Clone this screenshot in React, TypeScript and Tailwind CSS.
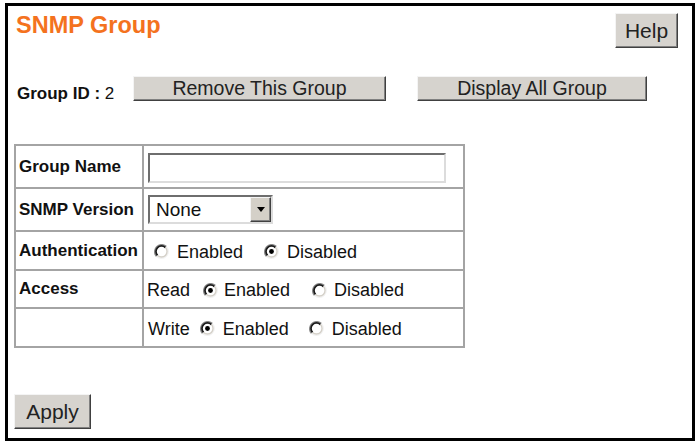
import React from "react";

function Radio({ checked }: { checked?: boolean }) {
  return (
    <svg width="15" height="15" viewBox="0 0 13 13" className="shrink-0">
      <circle cx="6.5" cy="6.5" r="5.5" fill="#ffffff" />
      <path d="M2.26 10.74 A6 6 0 0 1 10.74 2.26" fill="none" stroke="#8a8a8a" strokeWidth="1.4" />
      <path d="M10.74 2.26 A6 6 0 0 1 2.26 10.74" fill="none" stroke="#f2f2f2" strokeWidth="1.2" />
      <path d="M3.1 9.9 A4.8 4.8 0 0 1 9.9 3.1" fill="none" stroke="#1a1a1a" strokeWidth="1.5" />
      <path d="M9.9 3.1 A4.8 4.8 0 0 1 3.1 9.9" fill="none" stroke="#d4d0c8" strokeWidth="1.2" />
      {checked && <circle cx="6.5" cy="6.5" r="2.1" fill="#000000" />}
    </svg>
  );
}

const btn =
  "flex items-center justify-center bg-[#d6d3ce] border border-t-[#f4f4f4] border-l-[#f4f4f4] border-r-[#404040] border-b-[#404040] shadow-[inset_-1px_-1px_0_#808080] text-[#222] leading-none";

export default function App() {
  return (
    <div className="w-[698px] h-[442px] bg-white font-['Liberation_Sans',Arial,sans-serif] text-[#111] pt-[3px] pl-[5px]">
      <div className="w-[690px] h-[438px] border-[3px] border-black flex flex-col">
        {/* header */}
        <div className="flex justify-between items-start pt-[7px] pl-[8px] pr-[14px]">
          <div className="mt-[1px] text-[23.5px] leading-[23px] font-bold text-[#f4721e]">SNMP Group</div>
          <button className={btn + " w-[63px] h-[35px] text-[21px]"}>Help</button>
        </div>

        {/* group id row */}
        <div className="flex items-start mt-[28px] pl-[9px]">
          <div className="w-[116px] mt-[10px] text-[17px] leading-[16px]">
            <span className="font-bold">Group ID : </span>
            <span>2</span>
          </div>
          <button className={btn + " w-[253px] h-[25px] text-[19.5px]"}>Remove This Group</button>
          <button className={btn + " ml-[31px] w-[230px] h-[25px] text-[19.5px]"}>Display All Group</button>
        </div>

        {/* table */}
        <div className="mt-[42px] ml-[6px] w-[451px] border-2 border-b-0 border-[#a4a4a4] flex flex-col">
          {/* Group Name */}
          <div className="flex h-[43px] border-b-2 border-[#a4a4a4]">
            <div className="w-[128px] border-r-2 border-[#a4a4a4] flex items-center pl-[3px] text-[17px] font-bold">
              Group Name
            </div>
            <div className="flex-1 pt-[7px] pl-[4px]">
              <div className="w-[298px] h-[30px] bg-white border-2 border-t-[#6e6e6e] border-l-[#6e6e6e] border-r-[#dcdcdc] border-b-[#dcdcdc]" />
            </div>
          </div>
          {/* SNMP Version */}
          <div className="flex h-[43px] border-b-2 border-[#a4a4a4]">
            <div className="w-[128px] border-r-2 border-[#a4a4a4] flex items-center pl-[3px] text-[17px] font-bold">
              SNMP Version
            </div>
            <div className="flex-1 pt-[6px] pl-[4px]">
              <div className="w-[125px] h-[29px] bg-white border-2 border-t-[#6e6e6e] border-l-[#6e6e6e] border-r-[#dcdcdc] border-b-[#dcdcdc] flex items-center">
                <span className="flex-1 pl-[6px] text-[19px] leading-none">None</span>
                <div className="w-[21px] h-[25px] bg-[#d4d0c8] border border-t-[#f4f4f4] border-l-[#f4f4f4] border-r-[#404040] border-b-[#404040] shadow-[inset_-1px_-1px_0_#808080] flex items-center justify-center">
                  <svg width="8" height="5" viewBox="0 0 8 5">
                    <path d="M0 0 H8 L4 5 Z" fill="#000" />
                  </svg>
                </div>
              </div>
            </div>
          </div>
          {/* Authentication */}
          <div className="flex h-[39px] border-b-2 border-[#a4a4a4]">
            <div className="w-[128px] border-r-2 border-[#a4a4a4] flex items-center pl-[3px] text-[17px] font-bold">
              Authentication
            </div>
            <div className="flex-1 flex items-center pl-[10px] pt-[2px] text-[18px] leading-none">
              <Radio />
              <span className="ml-[8px]">Enabled</span>
              <span className="ml-[21px] flex"><Radio checked /></span>
              <span className="ml-[8px]">Disabled</span>
            </div>
          </div>
          {/* Access Read */}
          <div className="flex h-[38px] border-b-2 border-[#a4a4a4]">
            <div className="w-[128px] border-r-2 border-[#a4a4a4] flex items-center pl-[3px] text-[17px] font-bold">
              Access
            </div>
            <div className="flex-1 flex items-center pl-[3px] pt-[2px] text-[18px] leading-none">
              <span>Read</span>
              <span className="ml-[13px] flex"><Radio checked /></span>
              <span className="ml-[6px]">Enabled</span>
              <span className="ml-[22px] flex"><Radio /></span>
              <span className="ml-[7px]">Disabled</span>
            </div>
          </div>
          {/* Access Write */}
          <div className="flex h-[39px] border-b-2 border-[#a4a4a4]">
            <div className="w-[128px] border-r-2 border-[#a4a4a4]" />
            <div className="flex-1 flex items-center pl-[4px] pt-[2px] text-[18px] leading-none">
              <span>Write</span>
              <span className="ml-[10px] flex"><Radio checked /></span>
              <span className="ml-[8px]">Enabled</span>
              <span className="ml-[20px] flex"><Radio /></span>
              <span className="ml-[8px]">Disabled</span>
            </div>
          </div>
        </div>

        {/* apply */}
        <div className="mt-[46px] ml-[6px]">
          <button className={btn + " w-[77px] h-[35px] text-[21px]"}>Apply</button>
        </div>
      </div>
    </div>
  );
}
